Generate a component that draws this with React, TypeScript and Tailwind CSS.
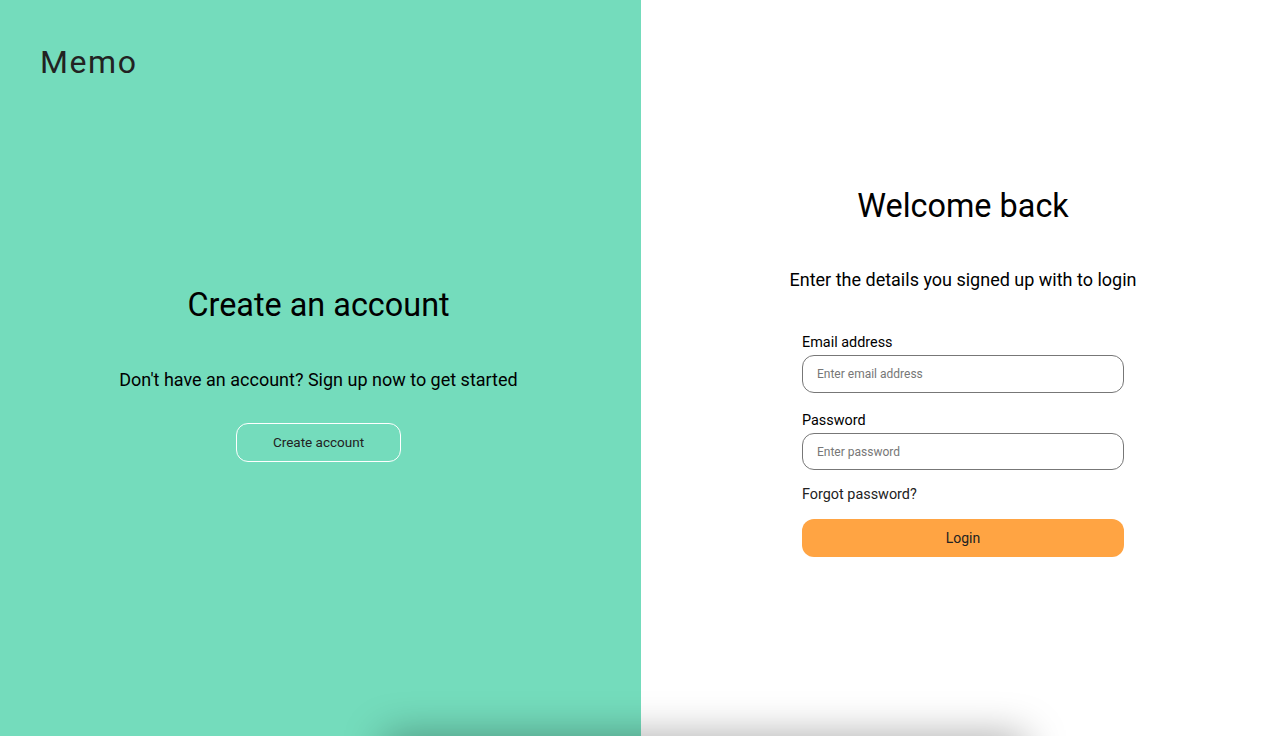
import React from 'react';

export default function App() {
  return (
    <div className="relative flex h-[736px] w-full overflow-hidden bg-white font-['Roboto',sans-serif]">
      <div className="flex w-[641px] shrink-0 flex-col bg-[#74dcbc] pl-10 pt-[42px]">
        <div className="text-[32px] leading-10 tracking-[1.6px] text-[#222]">Memo</div>
        <div className="mt-[203px] -ml-10 flex flex-col items-center pr-1">
          <h2 className="text-[32.4px] leading-10 text-black">Create an account</h2>
          <p className="mt-[43px] text-[18px] leading-6 text-black">
            Don't have an account? Sign up now to get started
          </p>
          <button className="mt-[31px] h-[39px] w-[165px] rounded-xl border border-white text-[13.5px] text-[#222]">
            Create account
          </button>
        </div>
      </div>

      <div className="flex flex-1 flex-col items-center pl-[6px] pt-[186px]">
        <h1 className="text-[32.4px] leading-10 text-black">Welcome back</h1>
        <p className="mt-[42px] text-[18px] leading-6 text-black">
          Enter the details you signed up with to login
        </p>
        <form className="mt-10 flex w-[322px] flex-col" onSubmit={(e) => e.preventDefault()}>
          <label className="mt-px text-[14.4px] leading-5 text-black">Email address</label>
          <input
            type="email"
            placeholder="Enter email address"
            className="mt-[2px] h-[38px] rounded-xl border border-[#777] px-[14px] text-[12px] placeholder:text-[#777] outline-none"
          />
          <label className="mt-[18px] text-[14.4px] leading-5 text-black">Password</label>
          <input
            type="password"
            placeholder="Enter password"
            className="mt-[2px] h-[37px] rounded-xl border border-[#777] px-[14px] text-[12px] placeholder:text-[#777] outline-none"
          />
          <a className="mt-[15px] text-[14.4px] leading-5 text-[#222]">Forgot password?</a>
          <button className="mt-[14px] h-[38px] rounded-xl bg-[#ffa443] text-[14px] text-[#222]">
            Login
          </button>
        </form>
      </div>

      <div className="absolute left-[385px] top-[736px] h-10 w-[640px] shadow-[0_0_40px_rgba(0,0,0,0.35)]" />
    </div>
  );
}
